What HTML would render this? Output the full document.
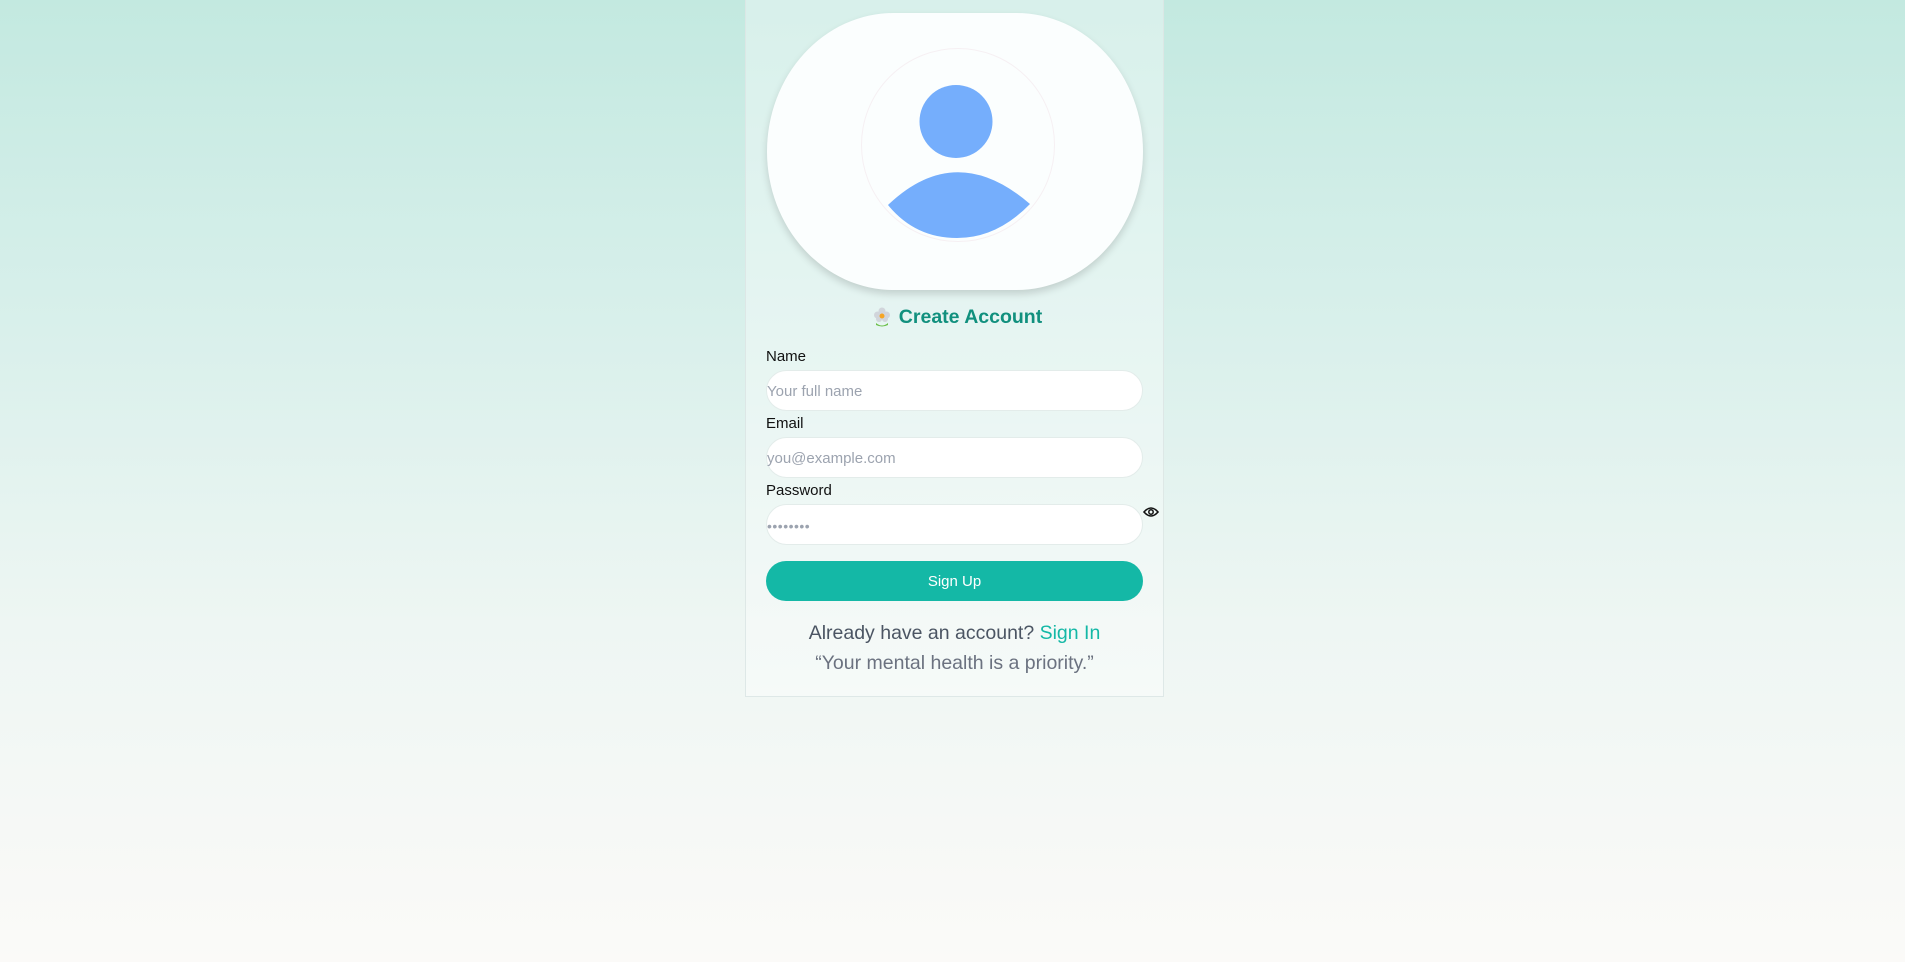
<!DOCTYPE html>
<html><head><meta charset="utf-8"><style>
*{box-sizing:border-box;margin:0;padding:0}
html,body{width:1905px;height:962px;overflow:hidden}
body{background:linear-gradient(180deg,#c3e9e0 0%,#d6efea 30%,#eef6f3 65%,#fbfaf8 100%);font-family:"Liberation Sans",sans-serif;position:relative}
.card{position:absolute;left:745px;top:-2px;width:419px;height:699px;background:rgba(255,255,255,0.35);border:1px solid rgba(220,230,228,0.9)}
.oval{position:absolute;left:767px;top:13px;width:376px;height:277px;border-radius:128px/140px;background:#fbfefe;box-shadow:0 4px 8px rgba(0,0,0,0.15)}
.inner{position:absolute;left:861px;top:48px;width:194px;height:194px;border-radius:50%;border:1px solid #f6f0f3}
.title{position:absolute;left:745px;width:419px;top:306px;text-align:center;font-size:19.5px;font-weight:bold;color:#11907e}
.lbl{position:absolute;left:766px;font-size:15px;color:#111}
.inp{position:absolute;left:766px;width:377px;height:41px;border-radius:21px;background:#fff;border:1px solid #e3ecea;font-size:15px;color:#9ca3af;line-height:42px;padding-left:0}
.btn{position:absolute;left:766px;top:561px;width:377px;height:40px;border-radius:20px;background:#14b8a6;color:#fff;font-size:15px;text-align:center;line-height:42px}
.t{position:absolute;left:745px;width:419px;text-align:center;font-size:19.5px;color:#4b5563}
</style></head><body>
<div class="card"></div>
<div class="oval"></div>
<div class="inner"></div>
<svg style="position:absolute;left:0;top:0" width="1905" height="300">
<circle cx="956" cy="121.5" r="36.5" fill="#75aefc"/>
<path d="M888 205 Q956 140 1030 204 Q997 238 957 238 Q915 238 888 205Z" fill="#75aefc"/>
</svg>
<svg style="position:absolute;left:872px;top:306px" width="20" height="22" viewBox="0 0 20 22">
<g fill="#d1d5db"><circle cx="10" cy="5" r="3.5"/><circle cx="5.5" cy="9" r="3.5"/><circle cx="14.5" cy="9" r="3.5"/><circle cx="7" cy="13" r="3"/><circle cx="13" cy="13" r="3"/></g>
<circle cx="10" cy="10" r="2.5" fill="#f5a524"/>
<path d="M4 17 Q10 22 16 17 L16 19 Q10 22 4 19Z" fill="#6cc04a"/>
</svg>
<div class="title"><span style="margin-left:32px">Create Account</span></div>
<div class="lbl" style="top:348px">Name</div>
<div class="inp" style="top:370px">Your full name</div>
<div class="lbl" style="top:415px">Email</div>
<div class="inp" style="top:437px">you@example.com</div>
<div class="lbl" style="top:482px">Password</div>
<div class="inp" style="top:504px;letter-spacing:0.5px;font-size:14px">••••••••</div>
<svg style="position:absolute;left:1143px;top:505px" width="16" height="14" viewBox="0 0 16 14">
<path d="M1 7 Q8 -1 15 7 Q8 15 1 7Z" fill="none" stroke="#111" stroke-width="1.6"/>
<circle cx="8" cy="7" r="2.2" fill="none" stroke="#111" stroke-width="1.5"/>
</svg>
<div class="btn">Sign Up</div>
<div class="t" style="top:622px">Already have an account? <span style="color:#14b8a6">Sign In</span></div>
<div class="t" style="top:652px;color:#6b7280">“Your mental health is a priority.”</div>
</body></html>
